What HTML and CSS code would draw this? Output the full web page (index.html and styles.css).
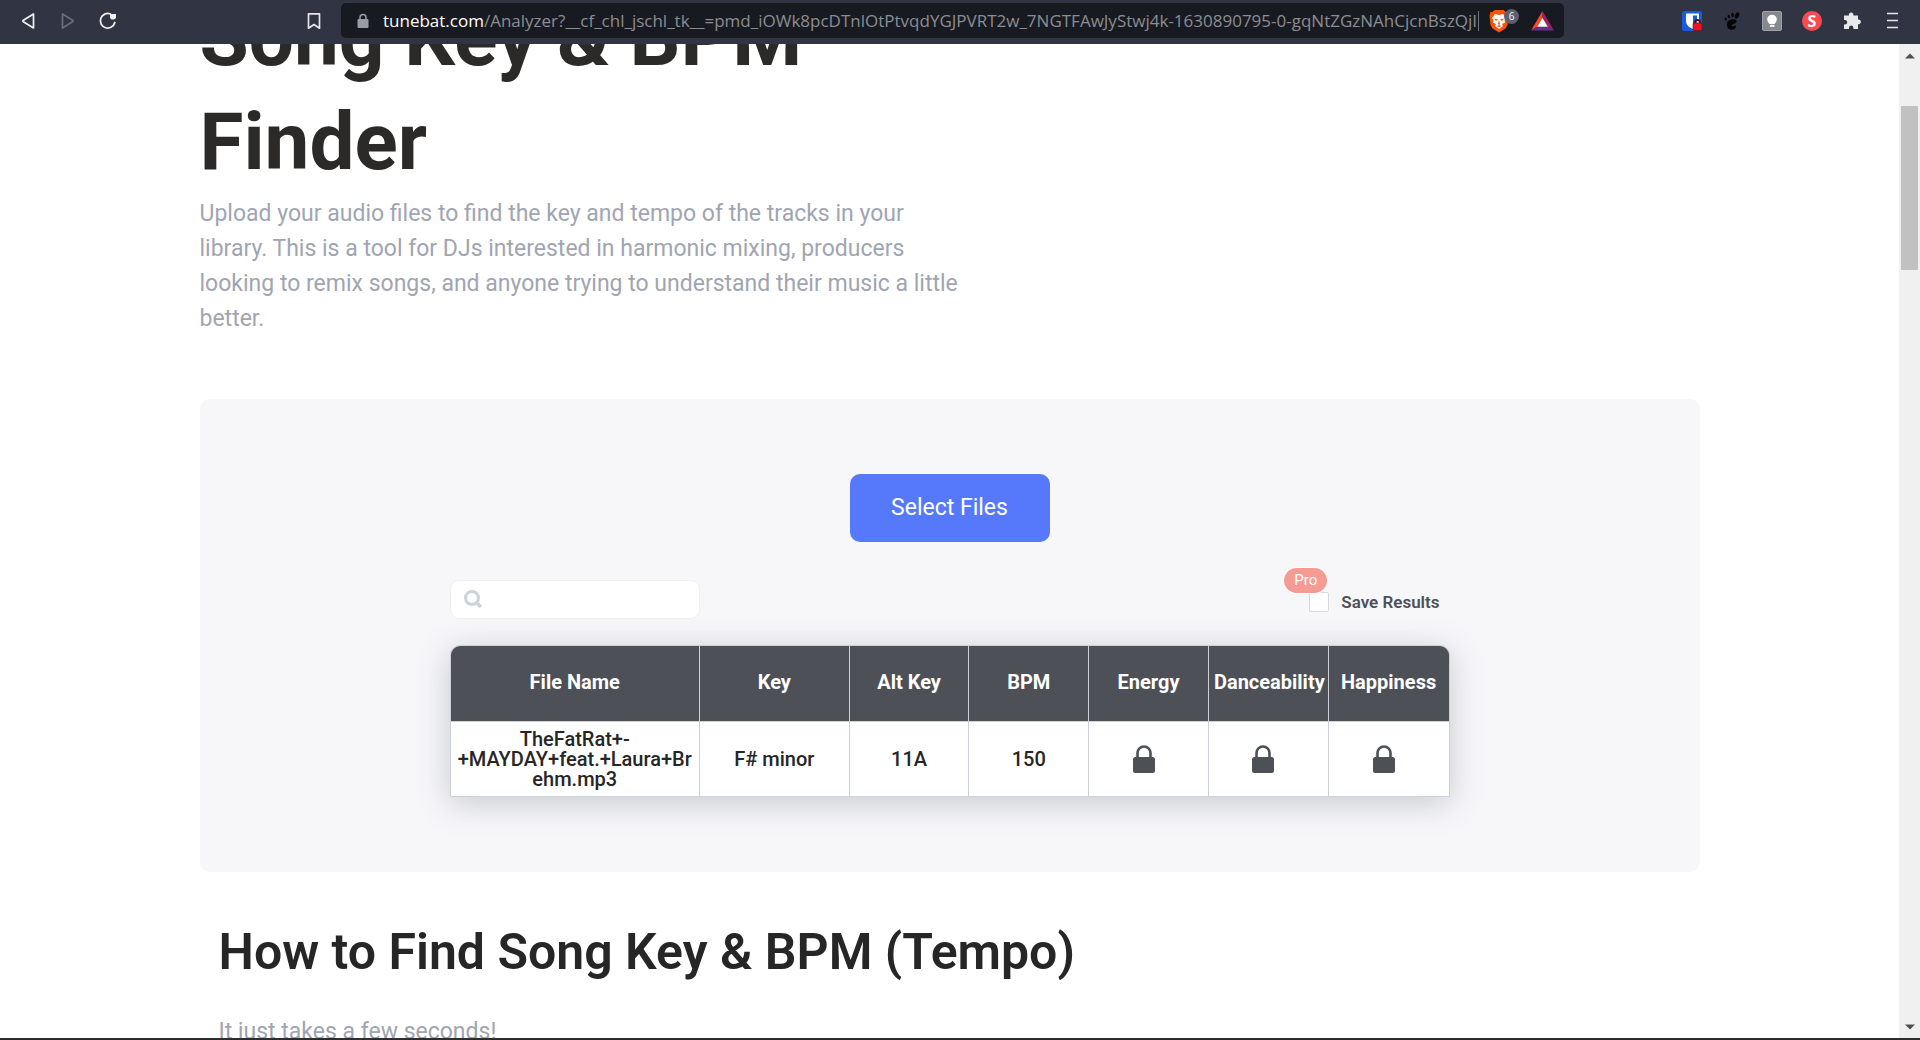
FILE: index.html
```html
<!DOCTYPE html>
<html lang="en">
<head>
<meta charset="utf-8">
<title>Song Key &amp; BPM Finder</title>
<link rel="stylesheet" href="styles.css">
</head>
<body>
<div class="browser">
  <header class="toolbar">
    <nav class="nav-buttons">
      <button class="icon-btn" aria-label="Back"><svg width="18" height="20" viewBox="0 0 18 20"><path d="M14.500 3v14L4 10.500v-1z" fill="none" stroke="#f0f0f2" stroke-width="1.700" stroke-linejoin="round"/></svg></button>
      <button class="icon-btn" aria-label="Forward"><svg width="18" height="20" viewBox="0 0 18 20"><path d="M3.500 3v14L14 10.500v-1z" fill="none" stroke="#6b6d7a" stroke-width="1.700" stroke-linejoin="round"/></svg></button>
      <button class="icon-btn" aria-label="Reload"><svg width="20" height="20" viewBox="0 0 20 20"><path d="M12.500 3A7.300 7.300 0 1 0 16.800 11.500" fill="none" stroke="#f0f0f2" stroke-width="1.800" stroke-linecap="round"/><path d="M12 3h6v4l-2 1.500h-2.500L12 7z" fill="#f0f0f2"/></svg></button>
    </nav>
    <button class="icon-btn bookmark" aria-label="Bookmark"><svg width="18" height="20" viewBox="0 0 18 20"><path d="M3.500 2.800h11v14.400L9 13.500l-5.500 3.700z" fill="none" stroke="#e6e6ea" stroke-width="1.700" stroke-linejoin="round"/></svg></button>
    <div class="address">
      <svg class="site-lock" width="12" height="16" viewBox="0 0 12 16"><path d="M3 7V4.500a3 3 0 0 1 6 0V7" fill="none" stroke="#9a9ca5" stroke-width="1.500"/><rect x="0.500" y="6" width="11" height="9" rx="1" fill="#9a9ca5"/></svg>
      <span class="url"><span class="host">tunebat.com</span>/Analyzer?__cf_chl_jschl_tk__=pmd_iOWk8pcDTnlOtPtvqdYGJPVRT2w_7NGTFAwJyStwj4k-1630890795-0-gqNtZGzNAhCjcnBszQjl</span>
      <span class="divider"></span>
      <button class="shield" aria-label="Shields">
        <svg width="20" height="24" viewBox="0 0 20 24"><path d="M5.500 1h9l2 2 2-.3 1 4-1 9.300-2 3.500-6.500 4-6.500-4-2-3.500L.500 6.700l1-4 2 .3z" fill="#fb5209"/><path d="M6 5l4 1 4-1 3 4-1.500 2 .5 2.500-3 1.500 1 2L10 20l-4-3 1-2-3-1.500.5-2.500L3 9z" fill="#fff"/><path d="M5 9.500l4 1-2 1.500zM15 9.500l-4 1 2 1.500zM10 11l1 4-1 1-1-1zM7.500 17L10 16l2.500 1-2.500 1z" fill="#fb5209"/></svg>
        <span class="count">6</span>
      </button>
      <button class="icon-btn" aria-label="Rewards"><svg width="23" height="20" viewBox="0 0 23 20"><path d="M11.500 0L0 19.500l6.500-4 5-8z" fill="#ff4724"/><path d="M11.500 0L23 19.500l-6.500-4-5-8z" fill="#9e1f63"/><path d="M0 19.500h23l-6.500-4h-10z" fill="#662d91"/><path d="M11.500 7l5.300 8.700H6.200z" fill="#fff"/></svg></button>
    </div>
    <div class="extensions">
      <button class="icon-btn" aria-label="Password manager"><svg width="20" height="20" viewBox="0 0 20 20"><rect width="20" height="20" rx="2.500" fill="#175ddc"/><path d="M4 2.500h13V10c0 4-3 6-6.500 8C7 16 4 14 4 10z" fill="#fff"/><path d="M11 4.500h4V10c0 2.500-1.500 4-4 5.500z" fill="#175ddc"/><path d="M13 13v-1.500a2.500 2.500 0 0 1 5 0V13" fill="none" stroke="#5a0a10" stroke-width="1.800"/><rect x="11" y="12" width="9" height="7.500" rx="1" fill="#ee1224" stroke="#5a0a10" stroke-width=".6"/></svg></button>
      <button class="icon-btn" aria-label="GNOME integration"><svg width="20" height="20" viewBox="0 0 20 20" fill="#050505"><ellipse cx="15" cy="4.500" rx="2" ry="3.400" transform="rotate(25 15 4.500)"/><ellipse cx="10.500" cy="4" rx="1.300" ry="2.200"/><ellipse cx="6.800" cy="5.500" rx="1.100" ry="1.900" transform="rotate(-15 6.800 5.500)"/><ellipse cx="3.800" cy="8" rx="1" ry="1.600" transform="rotate(-25 3.800 8)"/><path d="M14.500 9.500C13 7.500 6 8 5 12c-.8 3.500 1.500 6.800 5 6.700 3-.2 4.500-2.200 3.800-3.700-.8-1.500-2.200.800-3.500.2-1.300-.7.200-2 1.800-2.500 1.500-.5 3-1.700 2.400-3.200z"/></svg></button>
      <button class="icon-btn" aria-label="Notes"><svg width="20" height="20" viewBox="0 0 20 20"><rect x=".5" y=".5" width="19" height="19" rx="1.500" fill="#85888d" stroke="#a0a3a6"/><circle cx="10" cy="8.500" r="4.800" fill="#fff"/><path d="M7.500 11h5v2h-5zM8 14h4.500v1.800H8z" fill="#fff"/></svg></button>
      <button class="icon-btn letter" aria-label="Extension S">S</button>
      <button class="icon-btn" aria-label="Extensions"><svg width="20" height="20" viewBox="0 0 20 20"><path d="M2 4.500h5A2.300 2.300 0 1 1 11.300 4.500H16V8.500a2.400 2.400 0 1 1 0 4.700V18h-4.600v-1.200a2.200 2.200 0 0 0-4.400 0V18H2v-4.500h1a2.200 2.200 0 0 0 0-4.400H2z" fill="#e9e9ec"/></svg></button>
      <button class="icon-btn" aria-label="Menu"><svg width="20" height="20" viewBox="0 0 20 20"><path d="M5 2.500h11M5 9.500h11M5 16.500h11" stroke="#e9e9ec" stroke-width="1.600"/></svg></button>
    </div>
  </header>
  <div class="viewport">
    <main class="page">
      <div class="intro">
        <h1>Song Key &amp; BPM Finder</h1>
        <p>Upload your audio files to find the key and tempo of the tracks in your library. This is a tool for DJs interested in harmonic mixing, producers looking to remix songs, and anyone trying to understand their music a little better.</p>
      </div>
      <section class="panel">
        <button class="select-files">Select Files</button>
        <div class="results">
          <div class="controls">
            <label class="search">
              <svg width="20" height="20" viewBox="0 0 20 20"><circle cx="9" cy="8" r="6.500" fill="none" stroke="#ced2d9" stroke-width="3"/><path d="M13.500 12.500l4.500 4.500" stroke="#ced2d9" stroke-width="3.500"/></svg>
              <input type="text" aria-label="Search results">
            </label>
            <div class="save">
              <span class="pro">Pro</span>
              <input type="checkbox" id="save"><label for="save">Save Results</label>
            </div>
          </div>
          <table>
            <colgroup><col class="wide"><col class="mid"><col><col><col><col><col></colgroup>
            <thead><tr><th>File Name</th><th>Key</th><th>Alt Key</th><th>BPM</th><th>Energy</th><th>Danceability</th><th>Happiness</th></tr></thead>
            <tbody><tr>
              <td>TheFatRat+-+MAYDAY+feat.+Laura+Brehm.mp3</td><td>F# minor</td><td>11A</td><td>150</td>
              <td class="locked"><svg width="22" height="28" viewBox="0 0 22 28"><path d="M4.500 13V8a6.500 6.500 0 0 1 13 0v5" fill="none" stroke="#4d5057" stroke-width="2.600"/><rect y="12" width="22" height="16" rx="2.500" fill="#4d5057"/></svg></td>
              <td class="locked"><svg width="22" height="28" viewBox="0 0 22 28"><path d="M4.500 13V8a6.500 6.500 0 0 1 13 0v5" fill="none" stroke="#4d5057" stroke-width="2.600"/><rect y="12" width="22" height="16" rx="2.500" fill="#4d5057"/></svg></td>
              <td class="locked"><svg width="22" height="28" viewBox="0 0 22 28"><path d="M4.500 13V8a6.500 6.500 0 0 1 13 0v5" fill="none" stroke="#4d5057" stroke-width="2.600"/><rect y="12" width="22" height="16" rx="2.500" fill="#4d5057"/></svg></td>
            </tr></tbody>
          </table>
        </div>
      </section>
      <section class="howto">
        <h2>How to Find Song Key &amp; BPM (Tempo)</h2>
        <p>It just takes a few seconds!</p>
      </section>
    </main>
    <div class="scrollbar">
      <svg width="10" height="6" viewBox="0 0 10 6"><path d="M0 5.500L5 .5l5 5z" fill="#505050"/></svg>
      <div class="track"><div class="thumb"></div></div>
      <svg width="10" height="6" viewBox="0 0 10 6"><path d="M0 .5l5 5 5-5z" fill="#505050"/></svg>
    </div>
  </div>
  <footer class="edge"></footer>
</div>
</body>
</html>
```

FILE: styles.css
```css
* { box-sizing: border-box; }

body {
  margin: 0;
  background: #fff;
  color: #262626;
  font-family: Roboto, "Liberation Sans", sans-serif;
}

button {
  border: 0;
  padding: 0;
  background: none;
  font: inherit;
  cursor: pointer;
}

svg {
  display: block;
  flex: none;
}

.browser {
  display: grid;
  grid-template-columns: minmax(0, 1fr);
  grid-template-rows: auto minmax(0, 1fr) 2px;
  height: 100vh;
}

/* Browser toolbar */
.toolbar {
  display: flex;
  align-items: center;
  height: 44px;
  padding: 0 16px 3px;
  background: #313443;
}

.icon-btn {
  display: grid;
  flex: none;
  place-items: center;
  width: 24px;
  height: 24px;
}

.nav-buttons {
  display: flex;
  gap: 16px;
}

.bookmark { margin-left: 182px; }

.address {
  display: flex;
  flex: 1;
  align-items: center;
  min-width: 0;
  height: 35px;
  margin: 0 116px 0 15px;
  padding: 0 10px 0 16px;
  border-radius: 5px;
  background: #181a21;
}

.url {
  flex: 1;
  min-width: 0;
  margin-left: 14px;
  overflow: hidden;
  color: #8b8d92;
  font: 17px/24px "Open Sans", sans-serif;
  white-space: nowrap;
}

.host { color: #fff; }

.divider {
  flex: none;
  width: 1px;
  height: 20px;
  margin: 0 10px 0 1px;
  background: #74767c;
}

.shield {
  position: relative;
  flex: none;
  width: 30px;
  height: 24px;
  margin-right: 11px;
}

.count {
  position: absolute;
  top: 0;
  right: 0;
  width: 15px;
  height: 15px;
  border-radius: 8px;
  background: #5d6070;
  color: #fff;
  font: 10px/15px "Open Sans", sans-serif;
  text-align: center;
}

.extensions {
  display: flex;
  gap: 16px;
}

.letter {
  width: 20px;
  height: 20px;
  margin: 2px;
  border-radius: 10px;
  background: #fc4a50;
  color: #fff;
  font: 700 16px/20px "Open Sans", sans-serif;
}

/* Page */
.viewport {
  display: grid;
  grid-template-columns: minmax(0, 1fr) 21px;
  grid-template-rows: minmax(0, 1fr);
  overflow: hidden;
}

.page {
  width: 100%;
  max-width: 1500px;
  margin: -58px auto 0;
}

.intro {
  max-width: 760px;
  margin-bottom: 63px;
}

h1 {
  max-width: 700px;
  margin: 0 0 2px;
  color: #2b2a29;
  font-size: 80px;
  font-weight: 700;
  line-height: 104px;
}

p {
  margin: 0;
  color: #9fa5b1;
  font-size: 23px;
  line-height: 35px;
}

.panel {
  display: flex;
  flex-direction: column;
  align-items: center;
  padding: 75px 20px;
  border-radius: 10px;
  background: #f7f7fa;
}

.select-files {
  width: 200px;
  height: 68px;
  padding-bottom: 2px;
  border-radius: 10px;
  background: #5679fc;
  color: #fff;
  font-size: 23px;
}

.results {
  width: 100%;
  max-width: 1000px;
  margin-top: 38px;
}

.controls {
  display: flex;
  align-items: center;
  justify-content: space-between;
  margin-bottom: 26px;
}

.search {
  display: flex;
  align-items: center;
  gap: 8px;
  width: 250px;
  height: 39px;
  padding: 0 12px;
  border: 1px solid #eeeff1;
  border-radius: 9px;
  background: #fff;
}

.search input {
  flex: 1;
  min-width: 0;
  border: 0;
  outline: 0;
  font-size: 16px;
}

.save {
  position: relative;
  display: flex;
  align-items: center;
  gap: 12px;
  padding: 4px 10px 0 0;
  color: #4d5057;
  font-size: 17px;
  font-weight: 600;
}

.save input {
  width: 20px;
  height: 20px;
  margin: 0;
  appearance: none;
  border: 1px solid #d9d9d9;
  border-radius: 2px;
  background: #fff;
}

.pro {
  position: absolute;
  top: -20px;
  left: -25px;
  padding: 0 10px;
  border-radius: 13px;
  background: #f59b93;
  box-shadow: 0 0 0 1px #fff;
  color: #fff;
  font-size: 15px;
  font-weight: 400;
  line-height: 25px;
}

table {
  width: 100%;
  table-layout: fixed;
  border: 1px solid #cdd0d6;
  border-radius: 10px 10px 0 0;
  border-spacing: 0;
  background: #fff;
  box-shadow: 0 6px 32px rgba(60, 64, 80, .25);
  text-align: center;
}

.wide { width: 25%; }
.mid { width: 15%; }

th, td {
  height: 75px;
  padding: 0 5px;
  border-right: 1px solid #cdd0d6;
}

th {
  padding-bottom: 3px;
  background: #4d5057;
  color: #fff;
  font-size: 20px;
  font-weight: 700;
}

th:first-child { border-top-left-radius: 9px; }
th:last-child { border-top-right-radius: 9px; }
th:last-child, td:last-child { border-right: 0; }

td {
  border-top: 1px solid #cdd0d6;
  font-size: 20px;
  font-weight: 500;
  line-height: 20px;
  overflow-wrap: anywhere;
}

.locked { padding-right: 15px; }
.locked svg { margin: 0 auto; }

.howto { padding: 44px 19px 0; }

h2 {
  margin: 0 0 26px;
  font-size: 50px;
  font-weight: 600;
  line-height: 72px;
}

/* Window edges */
.scrollbar {
  display: flex;
  flex-direction: column;
  align-items: center;
  gap: 6px;
  padding: 9px 0 8px;
  background: #f0f0f0;
}

.track {
  flex: 1;
  width: 17px;
  padding-top: 41px;
}

.thumb {
  height: 18%;
  background: #c1c1c1;
}

.edge { background: #2d2d30; }
```
